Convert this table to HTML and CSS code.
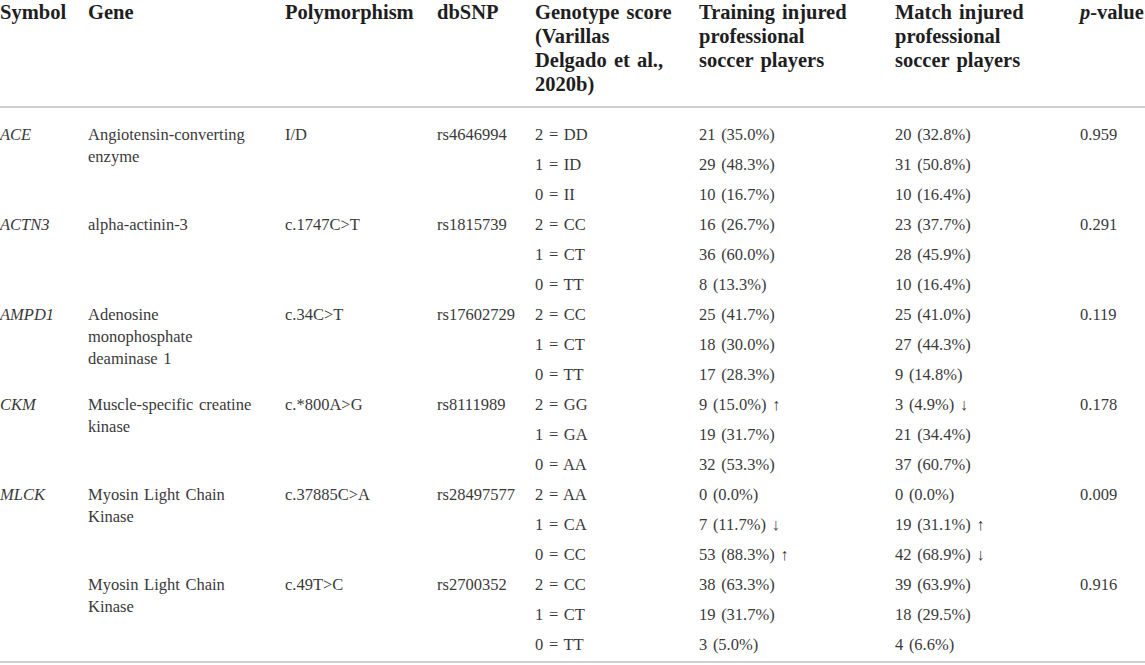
FILE: index.html
```html
<!DOCTYPE html>
<html lang="en">
<head>
    <meta charset="UTF-8">
    <title>Genotype distribution</title>
    <link rel="stylesheet" href="styles.css">
</head>
<body>
    <table class="geno-table">
        <colgroup>
            <col class="c-symbol">
            <col class="c-gene">
            <col class="c-poly">
            <col class="c-snp">
            <col class="c-score">
            <col class="c-train">
            <col class="c-match">
            <col class="c-p">
        </colgroup>
        <thead>
            <tr>
                <th>Symbol</th>
                <th>Gene</th>
                <th>Polymorphism</th>
                <th>dbSNP</th>
                <th>Genotype score<br>(Varillas<br>Delgado et al.,<br>2020b)</th>
                <th>Training injured<br>professional<br>soccer players</th>
                <th>Match injured<br>professional<br>soccer players</th>
                <th><i>p</i>-value</th>
            </tr>
        </thead>
        <tbody>
            <tr class="first">
                <td rowspan="3" class="sym">ACE</td>
                <td rowspan="3">Angiotensin-converting enzyme</td>
                <td rowspan="3">I/D</td>
                <td rowspan="3">rs4646994</td>
                <td>2 = DD</td>
                <td>21 (35.0%)</td>
                <td>20 (32.8%)</td>
                <td rowspan="3">0.959</td>
            </tr>
            <tr><td>1 = ID</td><td>29 (48.3%)</td><td>31 (50.8%)</td></tr>
            <tr><td>0 = II</td><td>10 (16.7%)</td><td>10 (16.4%)</td></tr>

            <tr>
                <td rowspan="3" class="sym">ACTN3</td>
                <td rowspan="3">alpha-actinin-3</td>
                <td rowspan="3">c.1747C&gt;T</td>
                <td rowspan="3">rs1815739</td>
                <td>2 = CC</td>
                <td>16 (26.7%)</td>
                <td>23 (37.7%)</td>
                <td rowspan="3">0.291</td>
            </tr>
            <tr><td>1 = CT</td><td>36 (60.0%)</td><td>28 (45.9%)</td></tr>
            <tr><td>0 = TT</td><td>8 (13.3%)</td><td>10 (16.4%)</td></tr>

            <tr>
                <td rowspan="3" class="sym">AMPD1</td>
                <td rowspan="3">Adenosine monophosphate deaminase 1</td>
                <td rowspan="3">c.34C&gt;T</td>
                <td rowspan="3">rs17602729</td>
                <td>2 = CC</td>
                <td>25 (41.7%)</td>
                <td>25 (41.0%)</td>
                <td rowspan="3">0.119</td>
            </tr>
            <tr><td>1 = CT</td><td>18 (30.0%)</td><td>27 (44.3%)</td></tr>
            <tr><td>0 = TT</td><td>17 (28.3%)</td><td>9 (14.8%)</td></tr>

            <tr>
                <td rowspan="3" class="sym">CKM</td>
                <td rowspan="3">Muscle-specific creatine kinase</td>
                <td rowspan="3">c.*800A&gt;G</td>
                <td rowspan="3">rs8111989</td>
                <td>2 = GG</td>
                <td>9 (15.0%) ↑</td>
                <td>3 (4.9%) ↓</td>
                <td rowspan="3">0.178</td>
            </tr>
            <tr><td>1 = GA</td><td>19 (31.7%)</td><td>21 (34.4%)</td></tr>
            <tr><td>0 = AA</td><td>32 (53.3%)</td><td>37 (60.7%)</td></tr>

            <tr>
                <td rowspan="3" class="sym">MLCK</td>
                <td rowspan="3">Myosin Light Chain Kinase</td>
                <td rowspan="3">c.37885C&gt;A</td>
                <td rowspan="3">rs28497577</td>
                <td>2 = AA</td>
                <td>0 (0.0%)</td>
                <td>0 (0.0%)</td>
                <td rowspan="3">0.009</td>
            </tr>
            <tr><td>1 = CA</td><td>7 (11.7%) ↓</td><td>19 (31.1%) ↑</td></tr>
            <tr><td>0 = CC</td><td>53 (88.3%) ↑</td><td>42 (68.9%) ↓</td></tr>

            <tr>
                <td rowspan="3" class="sym"></td>
                <td rowspan="3">Myosin Light Chain Kinase</td>
                <td rowspan="3">c.49T&gt;C</td>
                <td rowspan="3">rs2700352</td>
                <td>2 = CC</td>
                <td>38 (63.3%)</td>
                <td>39 (63.9%)</td>
                <td rowspan="3">0.916</td>
            </tr>
            <tr><td>1 = CT</td><td>19 (31.7%)</td><td>18 (29.5%)</td></tr>
            <tr class="last"><td>0 = TT</td><td>3 (5.0%)</td><td>4 (6.6%)</td></tr>
        </tbody>
    </table>
</body>
</html>
```

FILE: styles.css
```css
body {
    margin: 0;
    padding: 0;
    background: #fff;
    font-family: "Liberation Serif", "Times New Roman", serif;
}
.geno-table {
    width: 1145px;
    border-collapse: collapse;
    table-layout: fixed;
    border-bottom: 2px solid #cfcfcf;
}
.c-symbol { width: 88px; }
.c-gene { width: 197px; }
.c-poly { width: 152px; }
.c-snp { width: 98px; }
.c-score { width: 164px; }
.c-train { width: 196px; }
.c-match { width: 185px; }
.c-p { width: 65px; }

.geno-table th {
    text-align: left;
    vertical-align: top;
    font-size: 20.5px;
    line-height: 24px;
    font-weight: bold;
    word-spacing: 2px;
    color: #1e1e1e;
    white-space: nowrap;
    padding: 0 0 10px 0;
    border-bottom: 2px solid #cfcfcf;
}
.geno-table td {
    text-align: left;
    vertical-align: top;
    font-size: 16.5px;
    line-height: 22px;
    word-spacing: 1.5px;
    color: #3a3a3a;
    padding: 4px 24px 4px 0;
}
.geno-table td.sym {
    font-style: italic;
}
.geno-table tr.first td {
    padding-top: 16px;
}
.geno-table tr.last td {
    padding-bottom: 5px;
}
```
